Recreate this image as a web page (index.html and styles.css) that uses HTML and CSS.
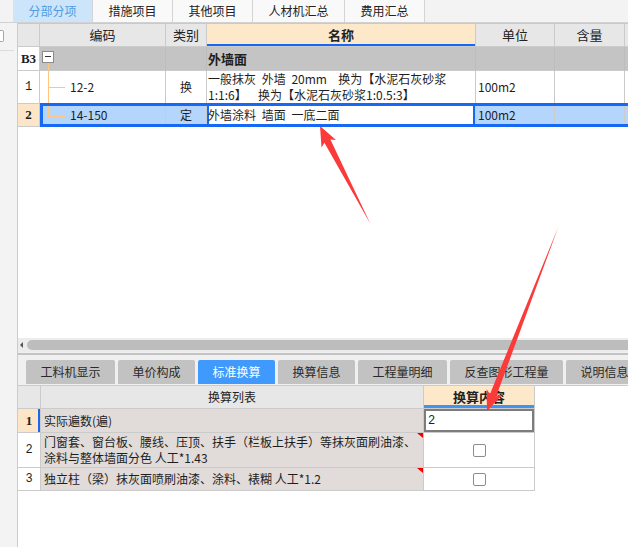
FILE: index.html
```html
<!DOCTYPE html>
<html lang="zh-CN">
<head>
<meta charset="utf-8">
<title>分部分项</title>
<link rel="stylesheet" href="styles.css">
</head>
<body>
<div class="app">
  <div class="topbar">
    <div class="ttab active">分部分项</div>
    <div class="ttab">措施项目</div>
    <div class="ttab">其他项目</div>
    <div class="ttab">人材机汇总</div>
    <div class="ttab">费用汇总</div>
  </div>
  <div class="main">
    <div class="sidebar">
      <div class="side-icon"></div>
      <div class="side-line"></div>
    </div>
    <div class="content">
      <div class="ugrid">
        <div class="urow head">
          <div class="c rn"></div>
          <div class="c ctr">编码</div>
          <div class="c ctr">类别</div>
          <div class="c ctr hl">名称</div>
          <div class="c ctr">单位</div>
          <div class="c ctr">含量</div>
          <div class="c"></div>
        </div>
        <div class="urow group">
          <div class="c rn bold">B3</div>
          <div class="c code"><span class="expander"></span><span class="tree-stem"></span></div>
          <div class="c"></div>
          <div class="c grp-name">外墙面</div>
          <div class="c"></div>
          <div class="c"></div>
          <div class="c"></div>
        </div>
        <div class="urow r1">
          <div class="c rn">1</div>
          <div class="c code tree mid">12-2</div>
          <div class="c ctr">换</div>
          <div class="c name">一般抹灰 外墙 20mm&nbsp; 换为【水泥石灰砂浆<br>1:1:6】&nbsp; 换为【水泥石灰砂浆1:0.5:3】</div>
          <div class="c">100m2</div>
          <div class="c"></div>
          <div class="c"></div>
        </div>
        <div class="urow r2 sel">
          <div class="c rn bold cur">2</div>
          <div class="c code tree last">14-150</div>
          <div class="c ctr">定</div>
          <div class="c name editing">外墙涂料 墙面 一底二面</div>
          <div class="c">100m2</div>
          <div class="c"></div>
          <div class="c"></div>
          <div class="selbox"></div>
        </div>
      </div>
      <div class="hscroll">
        <span class="harrow"></span>
        <span class="thumb"></span>
      </div>
      <div class="splitter"></div>
      <div class="btabs">
        <div class="btab">工料机显示</div>
        <div class="btab">单价构成</div>
        <div class="btab active">标准换算</div>
        <div class="btab">换算信息</div>
        <div class="btab">工程量明细</div>
        <div class="btab">反查图形工程量</div>
        <div class="btab">说明信息</div>
      </div>
      <div class="lgrid">
        <div class="lrow lhead">
          <div class="c rn"></div>
          <div class="c ctr">换算列表</div>
          <div class="c ctr hl2">换算内容</div>
        </div>
        <div class="lrow l1">
          <div class="c rn bold cur mark-left">1</div>
          <div class="c item">实际遍数(遍)</div>
          <div class="c val editbox">2</div>
        </div>
        <div class="lrow l2">
          <div class="c rn">2</div>
          <div class="c item flag">门窗套、窗台板、腰线、压顶、扶手（栏板上扶手）等抹灰面刷油漆、<br>涂料与整体墙面分色 人工*1.43</div>
          <div class="c val ctr"><span class="chk"></span></div>
        </div>
        <div class="lrow l3">
          <div class="c rn">3</div>
          <div class="c item flag">独立柱（梁）抹灰面喷刷油漆、涂料、裱糊 人工*1.2</div>
          <div class="c val ctr"><span class="chk"></span></div>
        </div>
      </div>
    </div>
  </div>
  <svg class="arrows" width="628" height="547" viewBox="0 0 628 547">
    <polygon fill="#fb3a3a" points="320,126 336,140 330.4,139.6 370.5,224 324.4,142.8 321.5,147.6"/>
    <polygon fill="#fb3a3a" points="487,411 501.8,395.2 496.2,396.4 558.3,227 490,394 486.6,389.3"/>
  </svg>
</div>
</body>
</html>
```

FILE: styles.css
```css
* { box-sizing: border-box; margin: 0; padding: 0; }
html, body { width: 628px; height: 547px; overflow: hidden; background: #fff; }
body {
  font-family: "Noto Sans CJK SC", "Noto Sans", sans-serif;
  font-size: 12px;
  line-height: 16px;
  color: #1e1e1e;
}
.app {
  position: relative;
  width: 628px;
  height: 547px;
  display: flex;
  flex-direction: column;
  overflow: hidden;
}

/* top tabs */
.topbar {
  height: 23px;
  flex: none;
  display: flex;
  padding-left: 13px;
  background: #f3f3f3;
  border-bottom: 1px solid #d2d2d2;
}
.ttab {
  height: 22px;
  padding: 0 15.5px;
  display: flex;
  align-items: center;
  font-size: 12px;
  color: #222;
  background: #f9f9f9;
  border-right: 1px solid #d4d4d4;
}
.ttab.active {
  background: #cde5fa;
  color: #4e9be4;
}

.main { flex: 1; display: flex; min-height: 0; }
.sidebar {
  width: 18px;
  flex: none;
  background: #f3f3f3;
  border-right: 1px solid #cbcbcb;
}
.side-icon {
  width: 4px;
  height: 12px;
  margin-top: 7px;
  border: 1px solid #a8a8a8;
  border-left: none;
  border-radius: 0 2px 2px 0;
  background: #fff;
}
.side-line {
  width: 14px;
  height: 1px;
  margin-top: 8px;
  background: #dcdcdc;
}
.content {
  flex: 1;
  min-width: 0;
  display: flex;
  flex-direction: column;
  overflow: hidden;
}

/* generic cell */
.c {
  display: flex;
  align-items: center;
  padding: 0 2px;
  border-right: 1px solid #cbcbcb;
  border-bottom: 1px solid #cbcbcb;
  white-space: nowrap;
  overflow: hidden;
  position: relative;
}
.ctr { justify-content: center; }
.rn {
  justify-content: center;
  font-family: "Liberation Serif", "Noto Sans CJK SC", serif;
  font-size: 13px;
  background: #fff;
}
.bold { font-weight: bold; }
.rn.cur { background: #fde6c8; }

/* upper grid */
.ugrid {
  height: 315px;
  flex: none;
  background: #fff;
  border-top: 1px solid #c9c9c9;
}
.urow {
  display: grid;
  grid-template-columns: 22px 126px 41px 269px 79px 70px 60px;
  grid-template-rows: 100%;
}
.urow > * { grid-row: 1; }
.urow > :nth-child(1) { grid-column: 1; }
.urow > :nth-child(2) { grid-column: 2; }
.urow > :nth-child(3) { grid-column: 3; }
.urow > :nth-child(4) { grid-column: 4; }
.urow > :nth-child(5) { grid-column: 5; }
.urow > :nth-child(6) { grid-column: 6; }
.urow > :nth-child(7) { grid-column: 7; }
.urow > .selbox { grid-column: 2 / 8; }
.head { height: 23px; }
.head .c { background: #e7e7e7; font-size: 13px; color: #222; }
.head .rn { background: #e7e7e7; }
.head .hl {
  background: #fde8ca;
  font-weight: bold;
  box-shadow: inset 0 -2px 0 #1769f5;
}
.group { height: 24px; }
.group .c { background: #c4c4c4; border-right-color: #bdbdbd; }
.group .rn { background: #fff; border-right-color: #cbcbcb; }
.grp-name { font-weight: bold; font-size: 13px; padding-left: 1px; }
.r1 { height: 33px; }
.r1 .name { align-items: flex-start; padding-top: 0; }
.r2 { height: 23px; }
.r2 .c { background: #b4d5fc; }
.r2 .rn { background: #fde6c8; }
.name { word-spacing: 3px; padding-left: 1px; }
.r2 .name.editing {
  background: #fff;
  box-shadow: inset 0 0 0 2px #1769f5;
}
.selbox {
  border: 3px solid #1769f5;
  margin-top: -1px;
  z-index: 2;
  pointer-events: none;
}

/* tree */
.code { padding-left: 30px; }
.expander {
  position: absolute;
  left: 2px;
  top: 4px;
  width: 12px;
  height: 12px;
  border: 1px solid #8a8a8a;
  background: #fff;
}
.expander::before {
  content: "";
  position: absolute;
  left: 2px;
  top: 4px;
  width: 6px;
  height: 1px;
  background: #333;
}
.tree-stem {
  position: absolute;
  left: 8px;
  top: 16px;
  bottom: -1px;
  width: 1px;
  background: #ffc77c;
}
.tree::before {
  content: "";
  position: absolute;
  left: 8px;
  top: 0;
  width: 1px;
  background: #ffc77c;
}
.tree.mid::before { bottom: -1px; }
.tree.last::before { height: 12px; }
.tree::after {
  content: "";
  position: absolute;
  left: 8px;
  width: 17px;
  height: 1px;
  background: #ffc77c;
}
.tree.mid::after { top: 16px; }
.tree.last::after { top: 12px; }

/* scrollbar */
.hscroll {
  height: 14px;
  flex: none;
  display: flex;
  align-items: center;
  background: #ececec;
}
.harrow {
  width: 0;
  height: 0;
  margin-left: 2px;
  border-style: solid;
  border-width: 3px 3px 3px 0;
  border-color: transparent #555 transparent transparent;
}
.thumb {
  flex: 1;
  height: 10px;
  margin-left: 4px;
  border-radius: 5px 0 0 5px;
  background: #bdbdbd;
}
.splitter {
  height: 3px;
  flex: none;
  background: #f0f0f0;
  border-bottom: 2px solid #c3c3c3;
}

/* bottom tabs */
.btabs {
  height: 30px;
  flex: none;
  display: flex;
  gap: 3px;
  padding: 5px 0 1px 8px;
  background: #f0f0f0;
}
.btab {
  flex: none;
  height: 24px;
  padding: 0 14.5px;
  display: flex;
  align-items: center;
  font-size: 12px;
  color: #2a2a2a;
  background: #c2c2c2;
  border-radius: 2px 2px 0 0;
}
.btab.active { background: #409afd; color: #fff; }

/* lower grid */
.lgrid {
  flex: 1;
  background: #fff;
  border-top: 1px solid #cbcbcb;
}
.lrow {
  display: grid;
  grid-template-columns: 23px 383px 111px;
}
.lhead { height: 23px; }
.lhead .c { background: #e7e7e7; color: #222; }
.lhead .hl2 {
  background: #fde8ca;
  font-weight: bold;
  font-size: 13px;
  box-shadow: inset 0 -3px 0 #3f93f5;
}
.l1 { height: 24px; }
.l2 { height: 35px; }
.l3 { height: 23px; }
.rn.mark-left { box-shadow: inset -2px 0 0 #1769f5; }
.item { background: #e1dcda; padding-left: 3px; }
.l2 .rn, .l3 .rn, .r1 .rn { font-family: "Liberation Mono", monospace; font-size: 12px; }
.val { background: #fff; }
.editbox {
  padding-left: 4px;
  box-shadow: inset 0 0 0 2px #7c7c7c;
  font-family: "Liberation Mono", monospace;
}
.flag::after {
  content: "";
  position: absolute;
  top: 0;
  right: 0;
  border-top: 5px solid #f20000;
  border-left: 6px solid transparent;
}
.chk {
  width: 13px;
  height: 13px;
  border: 1px solid #8c8c8c;
  border-radius: 2px;
  background: #fff;
}

/* annotation arrows */
.arrows {
  position: absolute;
  left: 0;
  top: 0;
  pointer-events: none;
}
```
